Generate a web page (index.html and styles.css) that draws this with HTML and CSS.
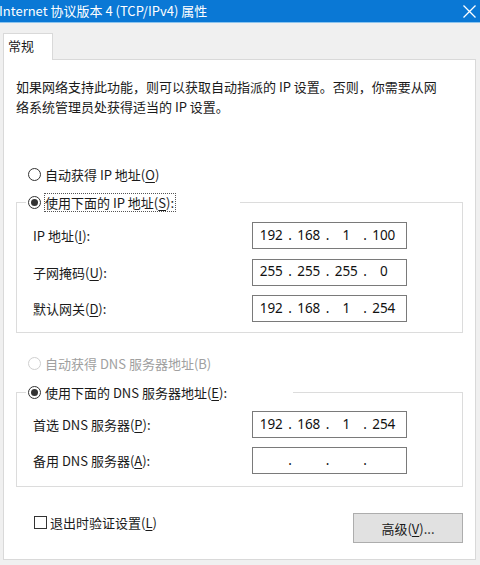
FILE: index.html
```html
<!DOCTYPE html>
<html lang="zh-CN">
<head>
<meta charset="utf-8">
<title>Internet 协议版本 4 (TCP/IPv4) 属性</title>
<link rel="stylesheet" href="styles.css">
</head>
<body>
<div class="titlebar">
  <span class="title">Internet 协议版本 4 (TCP/IPv4) 属性</span>
  <svg class="close" width="13" height="13" viewBox="0 0 13 13"><path d="M0.5 0.5 L12.5 12.5 M12.5 0.5 L0.5 12.5" stroke="#fff" stroke-width="1.3" fill="none"/></svg>
</div>
<div class="tabs"><div class="tab">常规</div></div>
<div class="panel">
  <p class="intro">如果网络支持此功能，则可以获取自动指派的 IP 设置。否则，你需要从网<br>络系统管理员处获得适当的 IP 设置。</p>

  <div class="radio-row first"><span class="radio"></span><span class="rlabel">自动获得 IP 地址(<u>O</u>)</span></div>

  <fieldset class="group">
    <legend class="legend legend-ip"><span class="radio on"></span><span class="rlabel focus">使用下面的 IP 地址(<u>S</u>):</span></legend>
    <div class="rows rows-ip">
      <div class="row"><span class="label">IP 地址(<u>I</u>):</span><div class="ipbox"><span class="oct">192</span><span class="dot">.</span><span class="oct">168</span><span class="dot">.</span><span class="oct">1</span><span class="dot">.</span><span class="oct">100</span></div></div>
      <div class="row"><span class="label">子网掩码(<u>U</u>):</span><div class="ipbox"><span class="oct">255</span><span class="dot">.</span><span class="oct">255</span><span class="dot">.</span><span class="oct">255</span><span class="dot">.</span><span class="oct">0</span></div></div>
      <div class="row"><span class="label">默认网关(<u>D</u>):</span><div class="ipbox"><span class="oct">192</span><span class="dot">.</span><span class="oct">168</span><span class="dot">.</span><span class="oct">1</span><span class="dot">.</span><span class="oct">254</span></div></div>
    </div>
  </fieldset>

  <div class="radio-row second disabled"><span class="radio"></span><span class="rlabel">自动获得 DNS 服务器地址(B)</span></div>

  <fieldset class="group group-dns">
    <legend class="legend legend-dns"><span class="radio on"></span><span class="rlabel">使用下面的 DNS 服务器地址(<u>E</u>):</span></legend>
    <div class="rows rows-dns">
      <div class="row"><span class="label">首选 DNS 服务器(<u>P</u>):</span><div class="ipbox"><span class="oct">192</span><span class="dot">.</span><span class="oct">168</span><span class="dot">.</span><span class="oct">1</span><span class="dot">.</span><span class="oct">254</span></div></div>
      <div class="row"><span class="label">备用 DNS 服务器(<u>A</u>):</span><div class="ipbox"><span class="oct"></span><span class="dot">.</span><span class="oct"></span><span class="dot">.</span><span class="oct"></span><span class="dot">.</span><span class="oct"></span></div></div>
    </div>
  </fieldset>

  <div class="bottom">
    <div class="check-row"><span class="checkbox"></span><span class="clabel">退出时验证设置(<u>L</u>)</span></div>
    <div class="button">高级(<u>V</u>)...</div>
  </div>
</div>
</body>
</html>
```

FILE: styles.css
```css
html, body {
  margin: 0;
  padding: 0;
}
body {
  width: 480px;
  height: 565px;
  overflow: hidden;
  background: #f0f0f0;
  font-family: "Noto Sans CJK SC", "Noto Sans", sans-serif;
  font-size: 13px;
  color: #1a1a1a;
}
u {
  text-decoration: underline;
  text-underline-offset: 2px;
}

.titlebar {
  height: 22px;
  background: #0a78d5;
  border-bottom: 1px solid #8cc4ee;
  display: flex;
  align-items: center;
  justify-content: space-between;
  color: #fff;
}
.title {
  font-size: 13px;
  margin-left: -1px;
  line-height: 22px;
}
.close {
  margin-right: 4px;
  display: block;
}

.tabs {
  padding-top: 10px;
  padding-left: 3px;
  display: flex;
}
.tab {
  width: 50px;
  height: 27px;
  box-sizing: border-box;
  border: 1px solid #d9d9d9;
  border-bottom: none;
  background: #fff;
  padding-left: 4px;
  line-height: 24px;
  margin-bottom: -1px;
  position: relative;
  z-index: 1;
}

.panel {
  margin-left: 3px;
  width: 473px;
  height: 501px;
  box-sizing: border-box;
  border: 1px solid #d9d9d9;
  background: #fff;
}

.intro {
  margin: 0;
  padding: 17px 12px 0 12px;
  line-height: 20px;
  white-space: nowrap;
}

.radio-row {
  display: flex;
  align-items: center;
  height: 20px;
  padding-left: 24px;
}
.radio-row.first { margin-top: 47px; }
.radio-row.second { margin-top: 20px; }

.radio {
  width: 13px;
  height: 13px;
  box-sizing: border-box;
  border: 1px solid #333;
  border-radius: 50%;
  background: #fff;
  display: flex;
  align-items: center;
  justify-content: center;
  flex: none;
}
.radio.on::after {
  content: "";
  width: 7px;
  height: 7px;
  border-radius: 50%;
  background: #333;
}
.rlabel {
  margin-left: 4px;
  white-space: nowrap;
  line-height: 17px;
}
.focus {
  outline: 1px dotted #555;
  outline-offset: 0;
  padding-right: 1px;
}
.disabled { color: #a0a0a0; }
.disabled .radio { border-color: #cfcfcf; }

.group {
  margin: 8px 12px 0 12px;
  padding: 0;
  border: 1px solid #dcdcdc;
  min-inline-size: 0;
}
.group-dns { margin-top: 9px; }

.legend {
  margin-left: 9px;
  padding: 0 0 0 2px;
  height: 20px;
  box-sizing: border-box;
  display: flex;
  align-items: center;
  background: #fff;
}
.legend-ip { width: 214px; }
.legend-dns { width: 267px; }

.rows {
  display: flex;
  flex-direction: column;
  padding-left: 16px;
}
.rows-ip { padding-top: 10px; padding-bottom: 10px; gap: 9.5px; }
.rows-dns { padding-top: 9px; padding-bottom: 12px; gap: 9px; }

.row {
  display: flex;
  align-items: center;
  height: 27px;
}
.label {
  width: 219px;
  flex: none;
  white-space: nowrap;
}
.ipbox {
  width: 155px;
  height: 27px;
  box-sizing: border-box;
  border: 1px solid #7a7a7a;
  display: flex;
  align-items: center;
  padding-left: 2.5px;
  font-family: "Noto Sans", sans-serif;
  font-size: 13.5px;
  color: #111;
  padding-bottom: 2px;
}
.oct {
  width: 31.5px;
  text-align: center;
  flex: none;
}
.dot {
  width: 6px;
  text-align: center;
  flex: none;
}

.bottom {
  display: flex;
  justify-content: space-between;
  align-items: flex-start;
  margin-top: 25px;
  padding-left: 30px;
  padding-right: 12px;
}
.check-row {
  display: flex;
  align-items: center;
  height: 20px;
}
.checkbox {
  width: 13px;
  height: 13px;
  box-sizing: border-box;
  border: 1px solid #333;
  background: #fff;
}
.clabel {
  margin-left: 3px;
  white-space: nowrap;
}
.button {
  width: 110px;
  height: 30px;
  box-sizing: border-box;
  margin-top: 1px;
  background: #e1e1e1;
  border: 1px solid #adadad;
  display: flex;
  align-items: center;
  justify-content: center;
  white-space: nowrap;
}
```
